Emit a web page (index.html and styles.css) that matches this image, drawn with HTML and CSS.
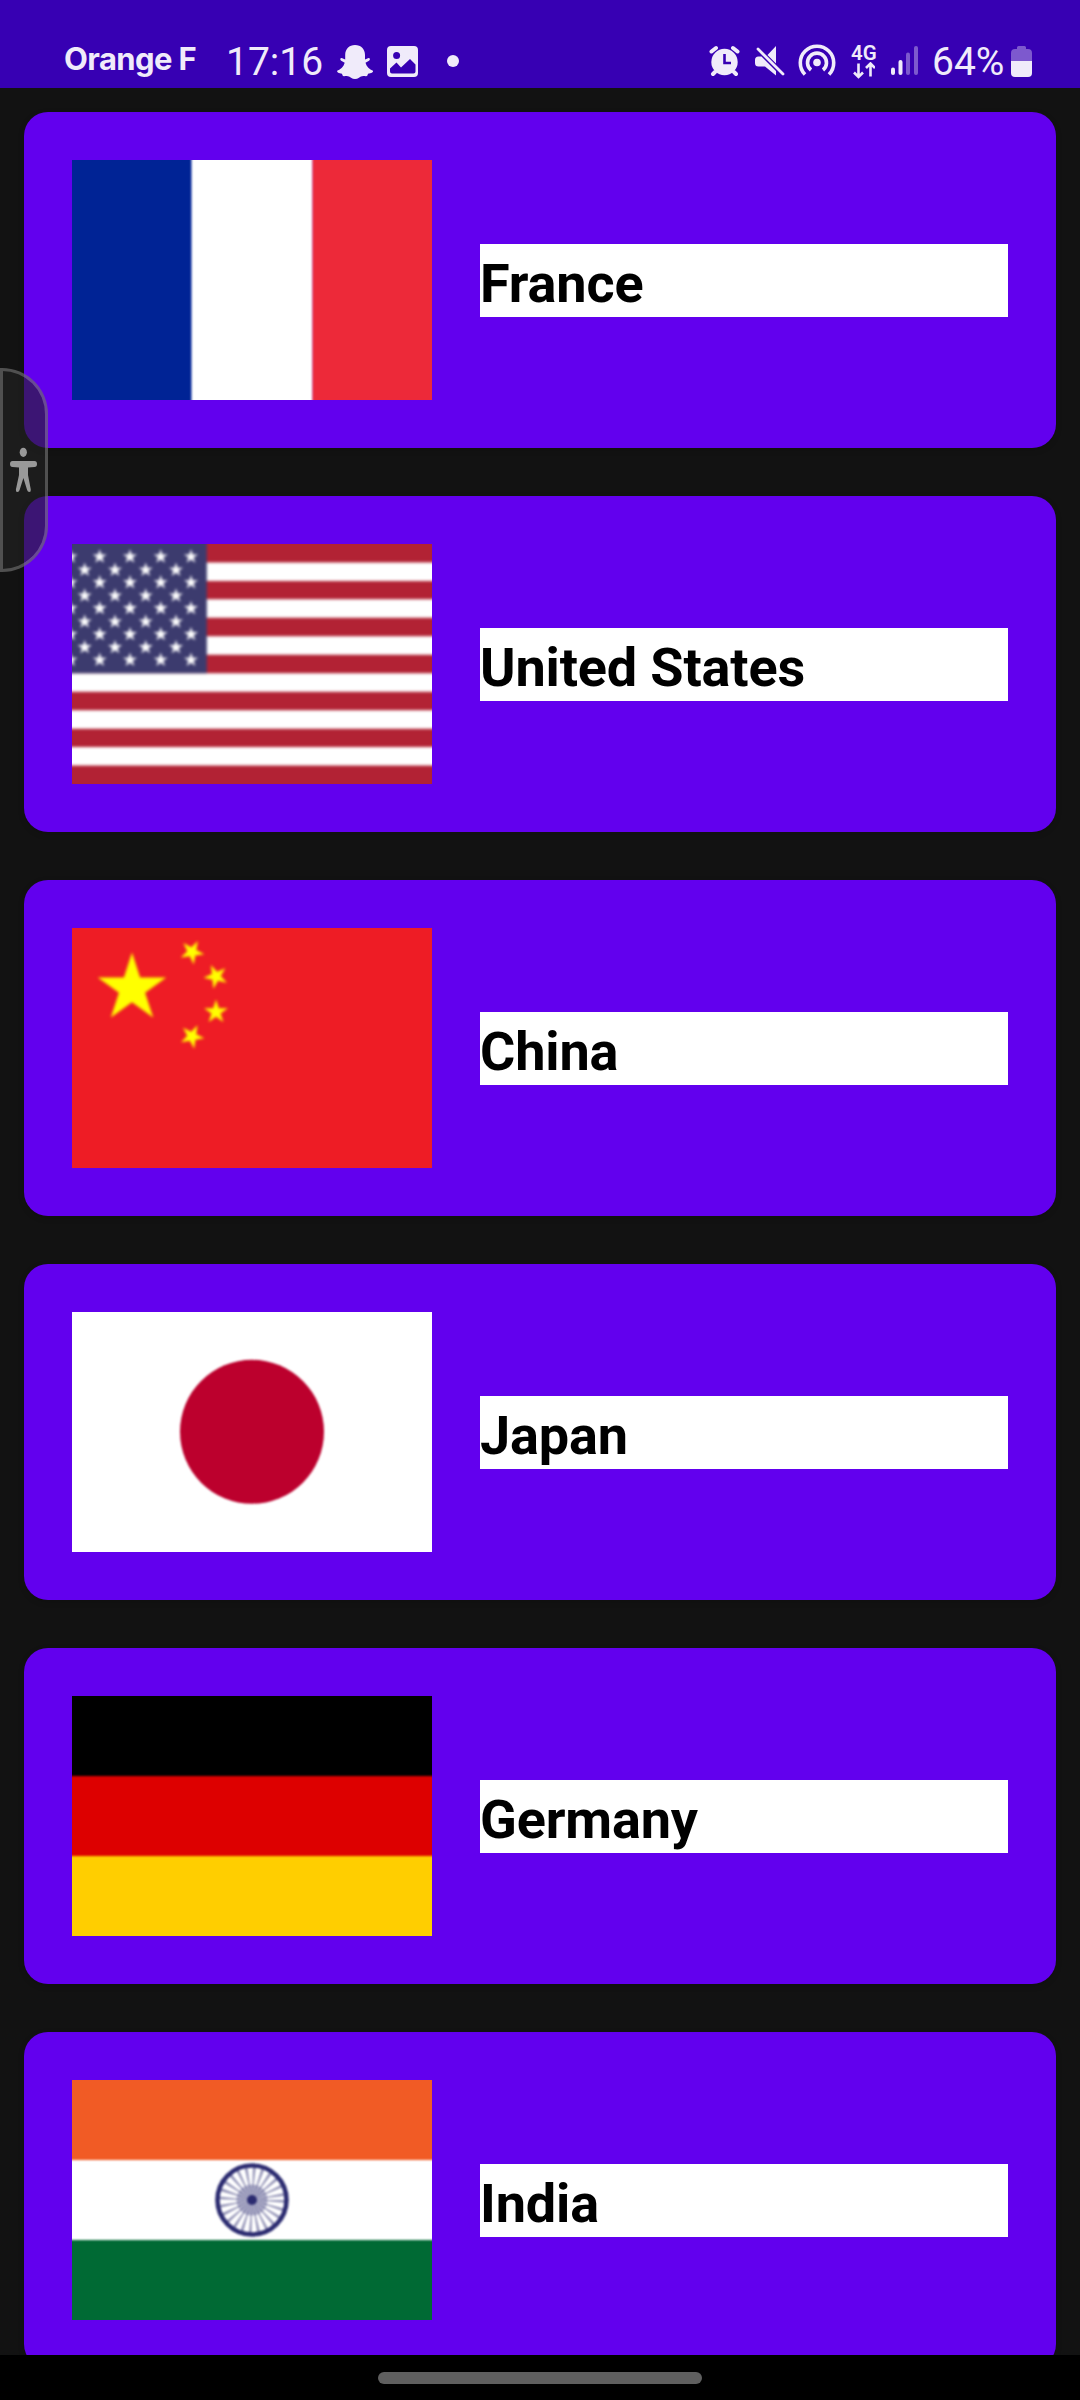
FILE: index.html
```html
<!DOCTYPE html>
<html lang="en">
<head>
<meta charset="utf-8">
<title>Countries</title>
<link rel="stylesheet" href="styles.css">
</head>
<body>
<svg class="defs" aria-hidden="true">
  <defs>
    <filter id="soft" x="-5%" y="-5%" width="110%" height="110%" color-interpolation-filters="sRGB"><feGaussianBlur stdDeviation="1.300"/></filter>
    <filter id="softer" x="-10%" y="-10%" width="120%" height="120%" color-interpolation-filters="sRGB"><feGaussianBlur stdDeviation="1.500"/></filter>
    <filter id="wheel" filterUnits="userSpaceOnUse" x="130" y="70" width="100" height="100" color-interpolation-filters="sRGB"><feGaussianBlur stdDeviation="1.300"/></filter>
    <polygon id="star" points="0,-1 .2245,-.309 .951,-.309 .363,.118 .588,.809 0,.382 -.588,.809 -.363,.118 -.951,-.309 -.2245,-.309"/>
    <g id="rowA"><use href="#star" transform="translate(-1.500 0) scale(7.400)"/><use href="#star" transform="translate(27.7 0) scale(7.400)"/><use href="#star" transform="translate(58 0) scale(7.400)"/><use href="#star" transform="translate(88.7 0) scale(7.400)"/><use href="#star" transform="translate(119 0) scale(7.400)"/></g>
    <g id="rowB"><use href="#star" transform="translate(12.7 0) scale(7.400)"/><use href="#star" transform="translate(43 0) scale(7.400)"/><use href="#star" transform="translate(73.7 0) scale(7.400)"/><use href="#star" transform="translate(104 0) scale(7.400)"/></g>
  </defs>
</svg>
<div class="screen">
  <header class="status">
    <span class="carrier">Orange F</span>
    <span class="clock">17:16</span>
    <svg class="icon snap" width="38" height="88" viewBox="336 0 38 88"><path d="M355 45c6 0 10 4 10 10v4.500l3.500-1.500c1.800 0 1.800 2 .5 2.800l-3.500 2c1 4 4 6.500 7.500 8 .6 1.500-2 2.500-5 3-.5 1.500-.5 2.500-2 2.500-4-.8-5 0-7 1.500-2.500 1.600-5.500 1.600-8 0-2-1.500-3-2.300-7-1.500-1.500 0-1.500-1-2-2.500-3-.5-5.400-1.500-4.800-3 3.500-1.500 6.500-4 7.500-8l-3.500-2c-1.300-.8-1.300-2.800.5-2.800l3.500 1.500V55c0-6 4-10 9.800-10z"/></svg>
    <svg class="icon photo" width="32" height="88" viewBox="387 0 32 88"><path fill-rule="evenodd" d="M391 46h23q4 0 4 4v23q0 4-4 4h-23q-4 0-4-4V50q0-4 4-4zm5.600 6a3.500 3.500 0 1 0 0 7 3.500 3.500 0 0 0 0-7zM390 68.500V71.500q0 2 2 2h21.500q2 0 2-2V64.500L410 59l-9 8.500-4.500-5z"/></svg>
    <span class="more"></span>
    <span class="spacer"></span>
    <svg class="icon" width="32" height="88" viewBox="709 0 32 88"><circle cx="724.500" cy="62" r="13.200"/><path class="line" d="M711.500 51.500l4.500-3.500M737.500 51.500l-4.500-3.500M715 72l-2 2M734 72l2 2"/><path class="cut" d="M724.500 54v9h6.500"/></svg>
    <svg class="icon mute" width="31" height="88" viewBox="754 0 31 88"><path d="M776 46v17.500L767.500 55zM758.500 56.500h3L776 71v4.500L765 66.500h-6.500q-3.500 0-3.500-3.500v-3q0-3.500 3.500-3.500z"/><path class="thin" d="M758 49l25 25"/></svg>
    <svg class="icon hotspot" width="40" height="88" viewBox="797 0 40 88"><circle cx="817" cy="62.500" r="3.800"/><path class="ring" d="M811 70a9.500 9.500 0 1 1 12 0M805 74.500a16.700 16.700 0 1 1 24 0"/></svg>
    <span class="network"><b>4G</b><svg class="icon" width="22" height="17" viewBox="853 62 22 17"><path class="arrow" d="M858.500 63.500v13M854 72.500l4.500 4.500 4.500-4.500M870.500 76.500v-12M866 68l4.500-4.500 4.500 4.500" /></svg></span>
    <svg class="icon signal" width="28" height="88" viewBox="890 0 28 88"><rect x="891" y="67.500" width="4" height="7.500" rx="2"/><rect x="898.500" y="60" width="4" height="15" rx="2"/><g opacity=".38"><rect x="906" y="52.500" width="4" height="22.500" rx="2"/><rect x="914" y="46" width="4" height="29" rx="2"/></g></svg>
    <span class="percent">64%</span>
    <svg class="icon battery" width="21" height="88" viewBox="1011 0 21 88"><path opacity=".38" d="M1011 61V53q0-4 4-4h2v-1.500q0-1.500 1.500-1.500h6q1.500 0 1.500 1.500V49h2q4 0 4 4v8z"/><path d="M1011 61h21v12q0 4-4 4h-13q-4 0-4-4z"/></svg>
  </header>

  <main class="list">
    <article class="card">
      <svg class="flag" viewBox="0 0 360 240"><g filter="url(#soft)"><path fill="#002395" d="M-10-10h130v260H-10z"/><path fill="#fff" d="M119.500-10h121v260h-121z"/><path fill="#ed2939" d="M240.500-10H370v260H240.500z"/></g></svg>
      <h2 class="name">France</h2>
    </article>
    <article class="card">
      <svg class="flag" viewBox="0 0 360 240"><g filter="url(#softer)"><path fill="#b22234" d="M-10-10h380v260H-10z"/><path stroke="#fff" stroke-width="18.460" d="M-10 27.700h380M-10 64.600h380M-10 101.500h380M-10 138.500h380M-10 175.400h380M-10 212.300h380"/><path fill="#3c3b6e" d="M-10-10h144.800v139.200H-10z"/>
        <g fill="#fff"><use href="#rowA" y="12.700"/><use href="#rowA" y="38.500"/><use href="#rowA" y="64.300"/><use href="#rowA" y="90.300"/><use href="#rowA" y="116"/><use href="#rowB" y="26"/><use href="#rowB" y="51.700"/><use href="#rowB" y="77.700"/><use href="#rowB" y="103.300"/></g></g></svg>
      <h2 class="name">United States</h2>
    </article>
    <article class="card">
      <svg class="flag" viewBox="0 0 360 240"><path fill="#ee1c25" d="M0 0h360v240H0z"/><g fill="#ff0" filter="url(#softer)"><use href="#star" transform="translate(60 60.500) scale(36)"/><use href="#star" transform="translate(120 24) rotate(28) scale(12.500)"/><use href="#star" transform="translate(144 48.500) rotate(48) scale(12.500)"/><use href="#star" transform="translate(144 84) scale(12.500)"/><use href="#star" transform="translate(120 108.500) rotate(26) scale(12.500)"/></g></svg>
      <h2 class="name">China</h2>
    </article>
    <article class="card">
      <svg class="flag" viewBox="0 0 360 240"><path fill="#fff" d="M0 0h360v240H0z"/><circle cx="180" cy="119.800" r="72" fill="#bc002d" filter="url(#soft)"/></svg>
      <h2 class="name">Japan</h2>
    </article>
    <article class="card">
      <svg class="flag" viewBox="0 0 360 240"><g filter="url(#soft)"><path d="M-10-10h380V80H-10z"/><path fill="#d00" d="M-10 80h380v80H-10z"/><path fill="#ffce00" d="M-10 160h380v90H-10z"/></g></svg>
      <h2 class="name">Germany</h2>
    </article>
    <article class="card">
      <svg class="flag" viewBox="0 0 360 240"><g filter="url(#soft)"><path fill="#f15b25" d="M-10-10h380V80H-10z"/><path fill="#fff" d="M-10 80h380v80H-10z"/><path fill="#006a34" d="M-10 160h380v90H-10z"/></g>
        <g fill="none" stroke="#2b2b70" filter="url(#wheel)"><circle cx="180" cy="120" r="34.500" stroke-width="4.600"/><circle cx="180" cy="120" r="15.500" fill="#2b2b70" fill-opacity=".35" stroke="none"/><circle cx="180" cy="120" r="17" stroke-width="32" stroke-opacity=".5" stroke-dasharray="1.500 2.951"/><circle cx="180" cy="120" r="5" fill="#2b2b70" stroke="none"/></g></svg>
      <h2 class="name">India</h2>
    </article>
  </main>

  <footer class="nav"><span class="handle"></span></footer>

  <div class="assist"><svg width="28" height="46" viewBox="10 447 28 46"><ellipse cx="23.300" cy="452.300" rx="3.600" ry="4.600"/><path d="M12.500 461h22q2.500 0 2.500 3t-2.500 3L28 467.500V475l2.800 14.500q.3 2.500-1.500 2.500-1.600 0-2.200-2L23.400 478l-3.800 12q-.6 2-2.200 2-1.900 0-1.500-2.500L19 475v-7.500L12.500 467q-2.500 0-2.500-3t2.500-3z"/></svg></div>
</div>
</body>
</html>
```
FILE: styles.css
```css
* { box-sizing: border-box; }
body { margin: 0; background: #121212; font-family: Roboto, sans-serif; }
.defs { position: absolute; width: 0; height: 0; }
.screen { position: relative; display: flex; flex-direction: column; width: 1080px; height: 2400px; overflow: hidden; background: #121212; }

.status { flex: none; display: flex; height: 88px; padding: 0 48px 0 64px; background: #3700b3; color: #f0ebfa; white-space: nowrap; }
.carrier { width: 162px; padding-top: 41px; font: bold 31px/35px Inter, "Liberation Sans", sans-serif; letter-spacing: -.6px; }
.clock { width: 110px; padding-top: 39px; font-size: 39px; line-height: 46px; }
.icon { flex: none; fill: #f0ebfa; }
.photo { margin-left: 13px; }
.more { width: 12px; height: 12px; margin: 55px 0 0 28px; border-radius: 50%; background: #f0ebfa; }
.spacer { flex: 1; }
.line, .cut, .thin, .ring, .arrow { fill: none; stroke: #f0ebfa; stroke-linecap: round; }
.line { stroke-width: 4; }
.cut { stroke: #3700b3; stroke-width: 2.6; stroke-linecap: butt; }
.thin { stroke-width: 2.8; }
.ring { stroke-width: 3.6; stroke-linecap: butt; }
.arrow { stroke-width: 2.6; stroke-linecap: butt; }
.mute { margin-left: 13px; }
.hotspot { margin-left: 12px; }
.network { display: flex; flex-direction: column; width: 28px; margin-left: 14px; padding-top: 41px; }
.network b { height: 21px; font-size: 20.5px; line-height: 24px; font-weight: 600; }
.network .icon { margin-left: 2px; }
.signal { margin-left: 11px; }
.percent { width: 77px; margin-left: 14px; padding-top: 39px; font-size: 39px; line-height: 46px; }
.battery { margin-left: 2px; }

.list { flex: 1; min-height: 0; display: flex; flex-direction: column; gap: 48px; padding: 24px 24px 0; overflow: hidden; }
.card { flex: none; display: flex; align-items: center; gap: 48px; height: 336px; padding: 48px; border-radius: 24px; background: #6200ee; box-shadow: 0 2px 6px rgba(0, 0, 0, .15); }
.flag { flex: none; display: block; width: 360px; height: 240px; overflow: hidden; }
.name { flex: 1; height: 73px; margin: 0; padding-top: 3px; background: #fff; color: #000; font-size: 54px; font-weight: bold; line-height: 73px; letter-spacing: -.15px; }

.nav { flex: none; display: flex; justify-content: center; height: 45px; padding-top: 17px; background: #000; }
.handle { width: 324px; height: 12px; border-radius: 6px; background: #5f5f5f; }

.assist { position: absolute; left: 0; top: 368px; width: 48px; height: 204px; border: 3px solid rgba(255, 255, 255, .23); border-radius: 0 46px 46px 0; background: rgba(35, 35, 35, .6); }
.assist svg { display: block; margin: 76px 0 0 7px; fill: #999; }
```
